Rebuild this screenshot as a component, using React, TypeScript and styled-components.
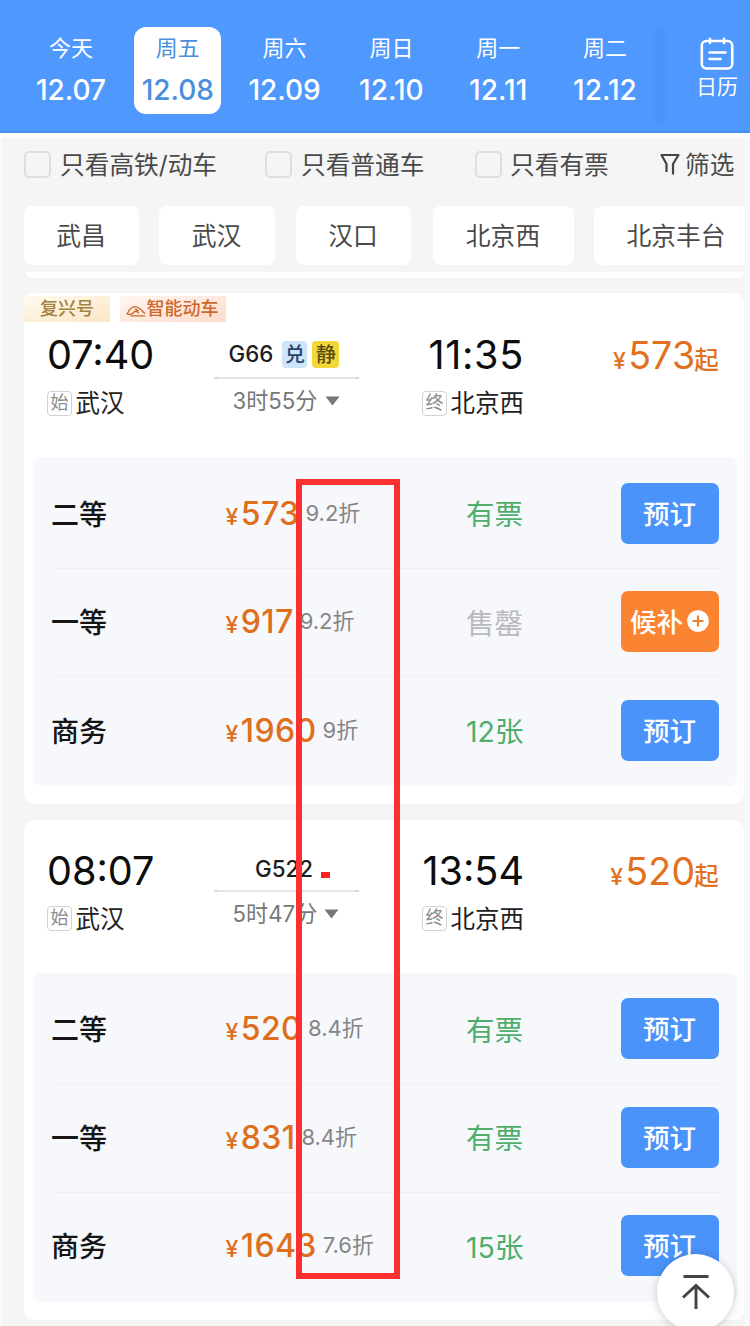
import React from "react";
import styled, { createGlobalStyle } from "styled-components";

const Global = createGlobalStyle`
  * { box-sizing: border-box; }
  html, body { margin: 0; padding: 0; }
  body {
    width: 750px;
    height: 1326px;
    overflow: hidden;
    background: #f5f5f5;
    font-family: Inter, "Noto Sans CJK SC", sans-serif;
    color: #111;
  }
  button { font: inherit; border: 0; padding: 0; }
`;

const Screen = styled.div`
  position: relative;
  width: 750px;
  height: 1326px;
  overflow: hidden;
  background: linear-gradient(90deg, #fafafa 0 2px, #f5f5f5 2px 745px, #fafafa 745px);
`;

const DateBar = styled.header`
  display: flex;
  height: 133px;
  padding: 27px 0 0 17px;
  background: #4f98fd;
  border-bottom: 2px solid #4590f0;
`;

const Day = styled.div<{ $active?: boolean }>`
  display: flex;
  flex: none;
  flex-direction: column;
  align-items: center;
  width: 87px;
  height: 87px;
  margin-right: 19.8px;
  padding-top: 5px;
  border-radius: 12px;
  background: ${(p) => (p.$active ? "#fff" : "transparent")};
  color: ${(p) => (p.$active ? "#4a8fdc" : "#fff")};
`;

const DayList = styled.div`
  display: flex;
  width: 639px;
  height: 98px;
  margin-left: 10.5px;
  background: linear-gradient(90deg, rgba(60, 135, 240, 0) 622px, rgba(60, 135, 240, 0.35) 634px, rgba(60, 135, 240, 0));
`;

const Weekday = styled.span`
  font-size: 22px;
  line-height: 32px;
`;

const DateText = styled.span`
  margin-top: 9px;
  font-size: 28px;
  font-weight: 500;
  line-height: 34px;
`;

const CalendarLink = styled.div`
  display: flex;
  flex-direction: column;
  align-items: center;
  width: 50px;
  margin-left: 25.5px;
  padding-top: 10px;
  color: #fff;
  font-size: 21px;
  line-height: 30px;

  svg { display: block; margin-bottom: 2px; }
`;

const FilterBar = styled.div`
  display: grid;
  grid-template-columns: 241px 210px 185px 1fr;
  align-items: center;
  height: 73px;
  padding: 0 0 15px 24px;
  border-top: 5px solid #fdfdfd;
  color: #4a4a4a;
  font-size: 24.7px;
  line-height: 30px;
  white-space: nowrap;
`;

const FilterItem = styled.div<{ $gap: number }>`
  display: flex;
  align-items: center;
  gap: ${(p) => p.$gap}px;
`;

const CheckBox = styled.span`
  width: 27px;
  height: 27px;
  border: 2px solid #dedede;
  border-radius: 5px;
`;

const ChipList = styled.div`
  display: flex;
  height: 59px;
  margin-right: 5px;
  padding-left: 24px;
  overflow: hidden;
`;

const Chip = styled.div<{ $w: number; $gap: number }>`
  flex: none;
  width: ${(p) => p.$w}px;
  margin-right: ${(p) => p.$gap}px;
  padding-right: 1px;
  border-radius: 8px;
  background: #fff;
  color: #4a4a4a;
  font-size: 24.8px;
  line-height: 60px;
  text-align: center;
`;

const CardTail = styled.div`
  height: 6px;
  margin: 7px 6px 15px 26px;
  border-radius: 0 0 8px 8px;
  background: #fff;
`;

const Card = styled.section<{ $h: number }>`
  height: ${(p) => p.$h}px;
  margin: 0 6px 16px 24px;
  border-radius: 10px;
  background: #fff;
`;

const Tags = styled.div`
  display: flex;
  gap: 10px;
  height: 29px;
  padding-top: 3px;
  font-size: 18px;
  line-height: 25px;
`;

const Tag = styled.span<{ $w: number; $tone: "gold" | "orange" }>`
  display: flex;
  align-items: center;
  justify-content: center;
  gap: 1px;
  width: ${(p) => p.$w}px;
  padding: 0 ${(p) => (p.$tone === "gold" ? 0 : 2)}px 1px 0;
  background: ${(p) =>
    p.$tone === "gold"
      ? "linear-gradient(165deg, #fffaf0, #fbe6c4)"
      : "linear-gradient(165deg, #fff6f0, #fbdccb)"};
  color: ${(p) => (p.$tone === "gold" ? "#a3813e" : "#d0682c")};
  font-weight: 500;

  svg { margin-top: 4px; }
`;

const Summary = styled.div<{ $top: number }>`
  display: flex;
  height: ${(p) => 123 + p.$top}px;
  padding: ${(p) => p.$top}px 25px 0 23px;
`;

const StopColumn = styled.div<{ $w: number; $end?: boolean }>`
  display: flex;
  flex-direction: column;
  align-items: ${(p) => (p.$end ? "flex-end" : "flex-start")};
  width: ${(p) => p.$w}px;
`;

const Clock = styled.span<{ $tracking?: number }>`
  font-size: 39.6px;
  line-height: 43px;
  letter-spacing: ${(p) => p.$tracking ?? 0}px;
  color: #0c0c0c;
`;

const Station = styled.div`
  display: flex;
  align-items: center;
  gap: 3.5px;
  margin-top: 10px;
  color: #222;
  font-size: 24.5px;
  line-height: 32px;
`;

const StopMark = styled.span`
  width: 25px;
  height: 25px;
  border: 1.5px solid #d2d2d2;
  border-radius: 4px;
  color: #8c8c8c;
  font-size: 18px;
  line-height: 21px;
  text-align: center;
`;

const TrainColumn = styled.div`
  display: flex;
  flex-direction: column;
  align-items: center;
  width: 145px;
`;

const TrainNo = styled.div`
  display: flex;
  align-items: center;
  gap: 5px;
  height: 32px;
  margin: 3px 5px 0 0;
  color: #1d1d1d;
  font-size: 22.3px;
  font-weight: 500;
`;

const Service = styled.span<{ $tone: "blue" | "yellow" }>`
  width: ${(p) => (p.$tone === "blue" ? 25 : 27)}px;
  height: 27px;
  margin-left: ${(p) => (p.$tone === "blue" ? 4 : 0)}px;
  margin-top: 3px;
  border-radius: 4px;
  background: ${(p) => (p.$tone === "blue" ? "#cfe3fb" : "#f4d838")};
  color: ${(p) => (p.$tone === "blue" ? "#23456f" : "#5b4a12")};
  font-size: 20px;
  line-height: 28px;
  text-align: center;
`;

const Rule = styled.div<{ $gap: number }>`
  width: 145px;
  height: 2px;
  margin-top: ${(p) => p.$gap}px;
  background: linear-gradient(90deg, #dadada 0 4px, #e6e6e6 4px 141px, #dadada 141px);
`;

const Duration = styled.div`
  display: flex;
  align-items: center;
  gap: 7px;
  margin: 8px 1px 0 0;
  color: #777;
  font-size: 22.2px;
  line-height: 28px;
`;

const FromPrice = styled.div`
  display: flex;
  flex: 1;
  align-items: baseline;
  justify-content: flex-end;
  height: 43px;
  color: #e2711f;
  font-size: 37.5px;
  font-weight: 400;
  line-height: 43px;
  letter-spacing: 0.2px;
  white-space: nowrap;
`;

const Yuan = styled.span`
  margin-right: 2px;
  font-size: 23px;
  font-weight: 500;
`;

const Since = styled.span`
  margin-left: -1px;
  font-size: 24.5px;
  font-weight: 500;
`;

const SeatPanel = styled.div`
  width: 704px;
  height: 329px;
  margin-left: 9px;
  padding: 2px 18px 0;
  border-radius: 8px;
  background: #f6f8fc;
`;

const SeatRow = styled.div`
  display: grid;
  grid-template-columns: 174px 241px 155px 98px;
  align-items: center;
  height: 108.5px;
  & + & { box-shadow: inset 0 1px #edf0f4; }
`;

const SeatName = styled.span`
  padding-bottom: 1px;
  color: #151515;
  font-size: 28px;
  font-weight: 500;
`;

const Fare = styled.div`
  display: flex;
  align-items: baseline;
  padding: 4px 0 0 0.5px;
  color: #de6f1c;
  font-size: 32px;
  font-weight: 450;
  line-height: 40px;
  letter-spacing: 0.4px;
  white-space: nowrap;
`;

const Discount = styled.span`
  margin: -5px 0 0 6px;
  align-self: center;
  color: #858585;
  font-size: 22px;
  font-weight: 400;
  letter-spacing: 0;
`;

const Stock = styled.span<{ $soldOut?: boolean }>`
  padding-bottom: 1px;
  color: ${(p) => (p.$soldOut ? "#b9b9bd" : "#4fae6b")};
  font-size: 28.5px;
`;

const OrderButton = styled.button<{ $waitlist?: boolean }>`
  display: flex;
  align-items: center;
  justify-content: center;
  gap: 4px;
  width: 98px;
  height: 61px;
  padding: 0 1px 2px 0;
  border-radius: 7px;
  background: ${(p) => (p.$waitlist ? "#fb8432" : "#4a93fa")};
  color: #fff;
  font-size: 26.5px;
  font-weight: 500;
`;

const Highlight = styled.div`
  position: absolute;
  left: 296px;
  top: 479px;
  width: 104px;
  height: 800px;
  border: 6px solid #fb3030;
`;

const HighlightDot = styled.div`
  position: absolute;
  left: 321px;
  top: 872px;
  width: 9px;
  height: 6px;
  background: #fb2424;
`;

const TopButton = styled.button`
  position: absolute;
  left: 657px;
  top: 1254px;
  display: flex;
  align-items: flex-start;
  justify-content: center;
  width: 77px;
  height: 77px;
  padding-top: 20px;
  border-radius: 50%;
  background: #fff;
  box-shadow: 0 1px 10px rgba(0, 0, 0, 0.2);
`;

const CalendarIcon = () => (
  <svg width="34" height="33" viewBox="0 0 34 33" fill="none" stroke="#fff" strokeWidth="2.6" strokeLinecap="round">
    <rect x="1.8" y="4" width="30.4" height="27.5" rx="4.5" />
    <path d="M10 1.8v4.2M24 1.8v4.2M9.500 15.500h16M9.500 22h11" />
  </svg>
);

const FunnelIcon = () => (
  <svg width="20" height="23" viewBox="0 0 20 23" fill="none" stroke="#444" strokeWidth="2.2" strokeLinejoin="round">
    <path d="M6.500 19V11L1.500 2h17L13 11v10.500" />
  </svg>
);

const TrainIcon = () => (
  <svg width="20" height="12" viewBox="0 0 21 13" fill="none" stroke="#d0682c" strokeWidth="1.5" strokeLinecap="round">
    <path d="M1 9.500C3 5 6 2 9.500 1.800c4 0 6.500 3.700 10.500 7.200" />
    <path d="M1 9.500c3 1.200 5.500.500 7-1.500s4-1.500 5 .500M5 11.800h15M10 4.500l3 1.500" />
  </svg>
);

const PlusIcon = () => (
  <svg width="22" height="22" viewBox="0 0 22 22">
    <circle cx="11" cy="11" r="10.8" fill="#fff" />
    <path d="M11 5.500v11M5.500 11h11" stroke="#f08030" strokeWidth="2.2" />
  </svg>
);

const CaretIcon = () => (
  <svg width="15" height="10" viewBox="0 0 15 10">
    <path d="M.5.500h14L7.500 9.500z" fill="#777" />
  </svg>
);

const ToTopIcon = () => (
  <svg width="30" height="36" viewBox="0 0 30 36" fill="none" stroke="#444" strokeWidth="2.9">
    <path d="M2.500 2.500h25M15 35V11.500M2 23.500 15 11.500l13 12" />
  </svg>
);

const days = [
  ["今天", "12.07"],
  ["周五", "12.08"],
  ["周六", "12.09"],
  ["周日", "12.10"],
  ["周一", "12.11"],
  ["周二", "12.12"],
];

const stations = [
  { name: "武昌", w: 115, gap: 20 },
  { name: "武汉", w: 116, gap: 21 },
  { name: "汉口", w: 115, gap: 22 },
  { name: "北京西", w: 141, gap: 20 },
  { name: "北京丰台", w: 165, gap: 0 },
];

type Seat = { name: string; price: string; discount: string; stock: string; soldOut?: boolean };

type Train = {
  no: string;
  depart: string;
  arrive: string;
  tracking?: number;
  duration: string;
  from: string;
  tagged?: boolean;
  height: number;
  seats: Seat[];
};

const trains: Train[] = [
  {
    no: "G66", depart: "07:40", arrive: "11:35", tracking: 0.7, duration: "3时55分", from: "573", tagged: true, height: 510.5,
    seats: [
      { name: "二等", price: "573", discount: "9.2折", stock: "有票" },
      { name: "一等", price: "917", discount: "9.2折", stock: "售罄", soldOut: true },
      { name: "商务", price: "1960", discount: "9折", stock: "12张" },
    ],
  },
  {
    no: "G522", depart: "08:07", arrive: "13:54", duration: "5时47分", from: "520", height: 500.5,
    seats: [
      { name: "二等", price: "520", discount: "8.4折", stock: "有票" },
      { name: "一等", price: "831", discount: "8.4折", stock: "有票" },
      { name: "商务", price: "1643", discount: "7.6折", stock: "15张" },
    ],
  },
];

const TrainCard = ({ train }: { train: Train }) => (
  <Card $h={train.height}>
    {train.tagged && (
      <Tags>
        <Tag $w={86} $tone="gold">复兴号</Tag>
        <Tag $w={106} $tone="orange"><TrainIcon />智能动车</Tag>
      </Tags>
    )}
    <Summary $top={train.tagged ? 12 : 30}>
      <StopColumn $w={167}>
        <Clock>{train.depart}</Clock>
        <Station><StopMark>始</StopMark>武汉</Station>
      </StopColumn>
      <TrainColumn>
        <TrainNo>
          {train.no}
          {train.tagged && (
            <>
              <Service $tone="blue">兑</Service>
              <Service $tone="yellow">静</Service>
            </>
          )}
        </TrainNo>
        <Rule $gap={train.tagged ? 8 : 5} />
        <Duration>{train.duration}<CaretIcon /></Duration>
      </TrainColumn>
      <StopColumn $w={165} $end>
        <Clock $tracking={train.tracking}>{train.arrive}</Clock>
        <Station><StopMark>终</StopMark>北京西</Station>
      </StopColumn>
      <FromPrice>
        <Yuan>¥</Yuan>{train.from}<Since>起</Since>
      </FromPrice>
    </Summary>
    <SeatPanel>
      {train.seats.map((s) => (
        <SeatRow key={s.name}>
          <SeatName>{s.name}</SeatName>
          <Fare>
            <Yuan>¥</Yuan>{s.price}
            <Discount>{s.discount}</Discount>
          </Fare>
          <Stock $soldOut={s.soldOut}>{s.stock}</Stock>
          <OrderButton $waitlist={s.soldOut}>
            {s.soldOut ? <>候补<PlusIcon /></> : "预订"}
          </OrderButton>
        </SeatRow>
      ))}
    </SeatPanel>
  </Card>
);

export default function App() {
  return (
    <>
      <Global />
      <Screen>
        <DateBar>
          <DayList>
            {days.map(([label, date], i) => (
              <Day key={date} $active={i === 1}>
                <Weekday>{label}</Weekday>
                <DateText>{date}</DateText>
              </Day>
            ))}
          </DayList>
          <CalendarLink><CalendarIcon />日历</CalendarLink>
        </DateBar>
        <FilterBar>
          <FilterItem $gap={9}><CheckBox />只看高铁/动车</FilterItem>
          <FilterItem $gap={9}><CheckBox />只看普通车</FilterItem>
          <FilterItem $gap={8}><CheckBox />只看有票</FilterItem>
          <FilterItem $gap={5}><FunnelIcon />筛选</FilterItem>
        </FilterBar>
        <ChipList>
          {stations.map((s) => (
            <Chip key={s.name} $w={s.w} $gap={s.gap}>{s.name}</Chip>
          ))}
        </ChipList>
        <CardTail />
        {trains.map((t) => <TrainCard key={t.no} train={t} />)}
        <Highlight />
        <HighlightDot />
        <TopButton aria-label="返回顶部"><ToTopIcon /></TopButton>
      </Screen>
    </>
  );
}
